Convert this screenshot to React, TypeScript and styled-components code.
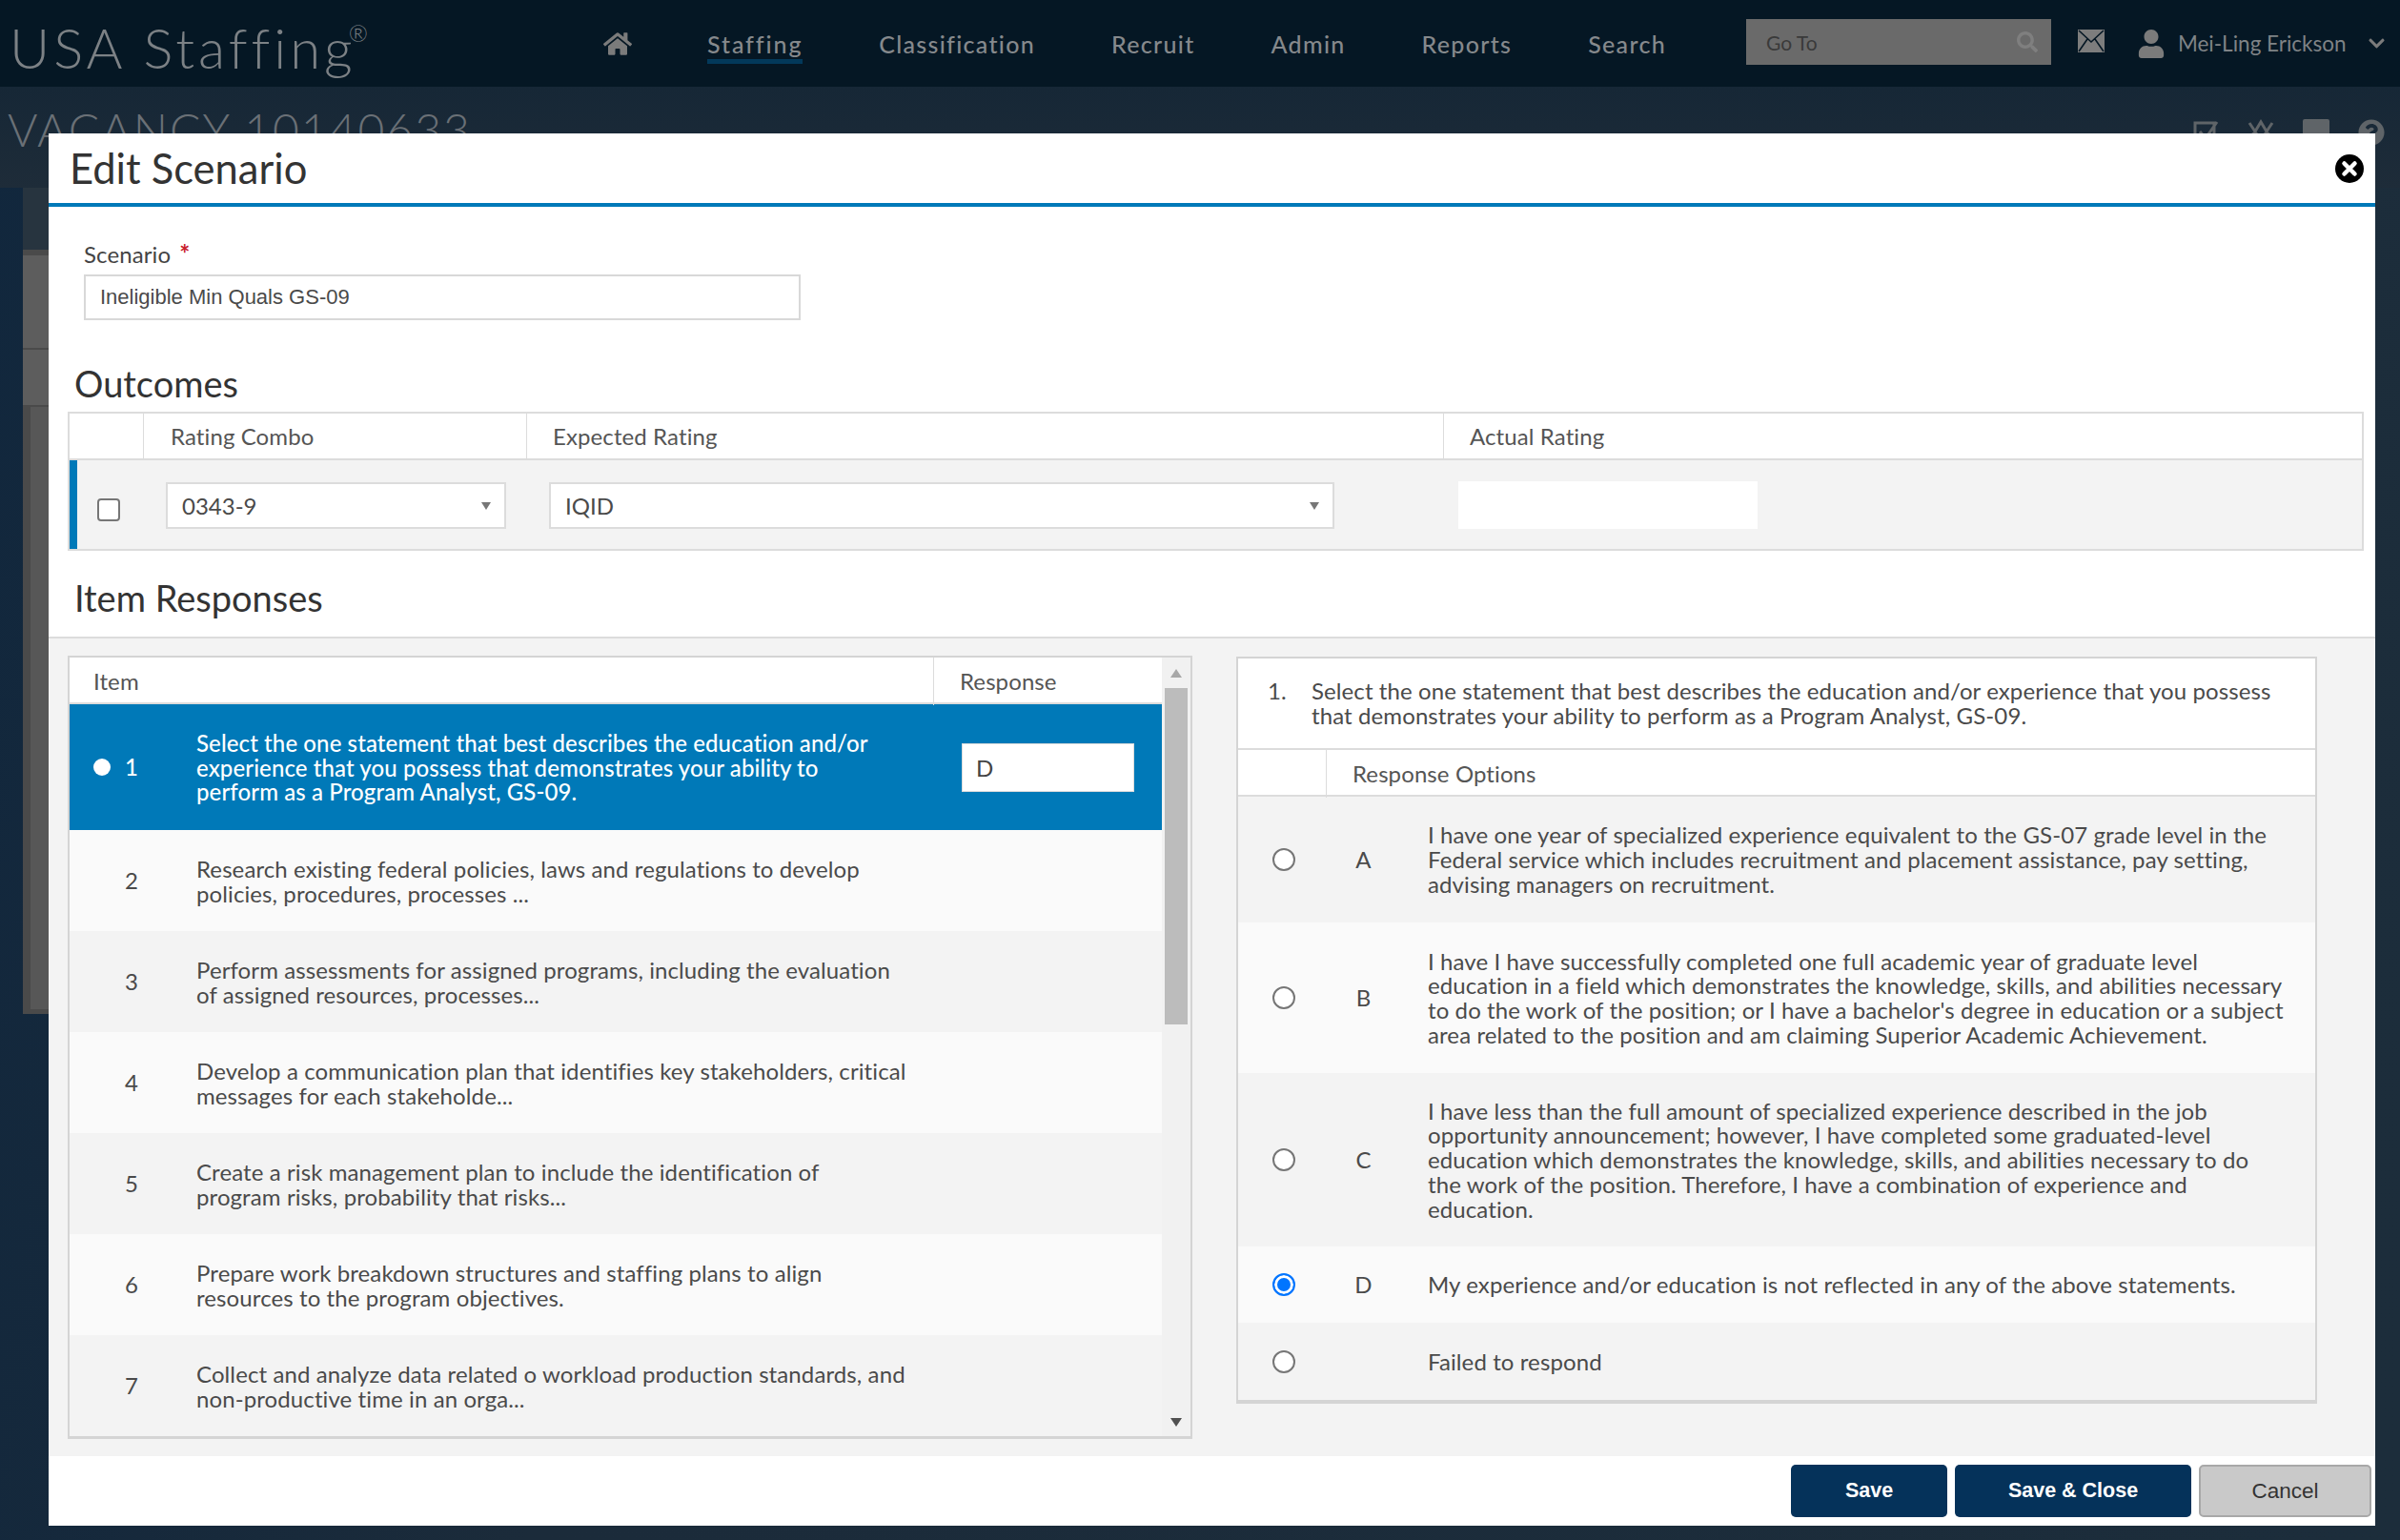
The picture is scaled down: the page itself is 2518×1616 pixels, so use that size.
import React from "react";
import styled, { createGlobalStyle } from "styled-components";
import { FaHome, FaSearch, FaUser, FaChevronDown, FaQuestionCircle } from "react-icons/fa";

const SANS = `"Lato", "Noto Sans", sans-serif`;
const ARIAL = `"Liberation Sans", Arial, sans-serif`;

const items = [
  { n: 1, text: "Select the one statement that best describes the education and/or\nexperience that you possess that demonstrates your ability to\nperform as a Program Analyst, GS-09." },
  { n: 2, text: "Research existing federal policies, laws and regulations to develop\npolicies, procedures, processes ..." },
  { n: 3, text: "Perform assessments for assigned programs, including the evaluation\nof assigned resources, processes..." },
  { n: 4, text: "Develop a communication plan that identifies key stakeholders, critical\nmessages for each stakeholde..." },
  { n: 5, text: "Create a risk management plan to include the identification of\nprogram risks, probability that risks..." },
  { n: 6, text: "Prepare work breakdown structures and staffing plans to align\nresources to the program objectives." },
  { n: 7, text: "Collect and analyze data related o workload production standards, and\nnon-productive time in an orga..." },
];

const options = [
  { key: "A", h: 132, text: "I have one year of specialized experience equivalent to the GS-07 grade level in the\nFederal service which includes recruitment and placement assistance, pay setting,\nadvising managers on recruitment." },
  { key: "B", h: 158, text: "I have I have successfully completed one full academic year of graduate level\neducation in a field which demonstrates the knowledge, skills, and abilities necessary\nto do the work of the position; or I have a bachelor's degree in education or a subject\narea related to the position and am claiming Superior Academic Achievement." },
  { key: "C", h: 182, text: "I have less than the full amount of specialized experience described in the job\nopportunity announcement; however, I have completed some graduated-level\neducation which demonstrates the knowledge, skills, and abilities necessary to do\nthe work of the position. Therefore, I have a combination of experience and\neducation." },
  { key: "D", h: 80, text: "My experience and/or education is not reflected in any of the above statements.", checked: true },
  { key: "", h: 81, text: "Failed to respond" },
];

const GlobalStyle = createGlobalStyle`
  html, body {
    margin: 0;
    padding: 0;
    background: #14283a;
    overflow: hidden;
  }
  * { box-sizing: border-box; }
`;

const Page = styled.div`
  position: relative;
  width: 2518px;
  height: 1616px;
  overflow: hidden;
  font-family: ${SANS};
  background: linear-gradient(100deg, #11273d 0%, #1b2b3a 30%, #1c2d3b 100%);
`;

const TopBar = styled.header`
  display: flex;
  align-items: center;
  height: 91px;
  padding-left: 10px;
  background: #051724;
  color: #85898c;
`;

const Logo = styled.div`
  width: 623px;
  padding-top: 8px;
  font-size: 58px;
  font-weight: 300;
  letter-spacing: 4px;
  color: #7c8185;
  white-space: nowrap;
  sup {
    margin-left: -8px;
    font-size: 24px;
    vertical-align: 28px;
    line-height: 0;
    letter-spacing: 0;
  }
`;

const HomeLink = styled.span`
  display: flex;
  width: 109px;
  font-size: 30px;
  color: #7b7b7b;
`;

const Nav = styled.nav`
  display: flex;
  gap: 80px;
`;

const NavLink = styled.span<{ $active?: boolean }>`
  position: relative;
  font-size: 25px;
  line-height: 30px;
  font-weight: 500;
  letter-spacing: ${(p) => (p.$active ? "1.9px" : "1.3px")};
  color: #85898c;
  &::after {
    content: "";
    display: ${(p) => (p.$active ? "block" : "none")};
    position: absolute;
    left: 0;
    right: 0;
    bottom: -6px;
    height: 5px;
    background: #03395a;
  }
`;

const GoTo = styled.div`
  display: flex;
  align-items: center;
  justify-content: space-between;
  width: 320px;
  height: 48px;
  margin-left: 84px;
  margin-bottom: 3px;
  padding: 0 14px 0 21px;
  background: #6a6a6a;
  font-size: 21px;
  color: #3a3a3a;
  svg { font-size: 22px; color: #7f7f7f; }
`;

const MailIcon = styled.svg`
  width: 28px;
  height: 24px;
  margin-left: 28px;
  margin-bottom: 5px;
`;

const UserBox = styled.div`
  display: flex;
  align-items: center;
  margin-left: 34px;
  font-size: 22.5px;
  color: #7f8386;
  white-space: nowrap;
  svg:first-child { font-size: 30px; margin-right: 13px; color: #7b7b7b; }
  svg:last-child { font-size: 19px; margin-left: 22px; color: #7b7b7b; }
`;

const TitleRow = styled.div`
  display: flex;
  justify-content: space-between;
  align-items: flex-start;
  height: 106px;
  padding: 20px 16px 0 8px;
  background: linear-gradient(180deg, #162736, #1e2c39);
`;

const VacancyTitle = styled.div`
  font-size: 48px;
  line-height: 50px;
  font-weight: 300;
  letter-spacing: 2px;
  color: #6a7076;
`;

const TitleIcons = styled.div`
  display: flex;
  gap: 30px;
  padding-top: 14px;
  color: #5f6468;
  font-size: 28px;
  svg { width: 28px; height: 28px; }
`;

const BackCard = styled.div`
  width: 27px;
  height: 867px;
  margin-left: 24px;
  background: #4a4a4a;
`;

const BackCardHead = styled.div`
  height: 65px;
  background: #27343f;
  margin-bottom: 6px;
`;

const BackCardBand = styled.div<{ $h: number }>`
  height: ${(p) => p.$h}px;
  margin-bottom: 2px;
  background: #5d5d5d;
`;

const BackCardInner = styled.div`
  height: 632px;
  margin-left: 8px;
  background: #575757;
`;

const Modal = styled.div`
  position: absolute;
  left: 51px;
  top: 140px;
  display: flex;
  flex-direction: column;
  width: 2441px;
  height: 1461px;
  background: #fff;
  color: #444;
`;

const ModalHeader = styled.div`
  display: flex;
  align-items: center;
  justify-content: space-between;
  height: 77px;
  padding: 0 12px 2px 22px;
  border-bottom: 4px solid #0079b8;
`;

const ModalTitle = styled.h1`
  margin: 0;
  font-size: 43.5px;
  font-weight: 400;
  color: #333;
`;

const CloseIcon = styled.svg`
  width: 30px;
  height: 30px;
  margin-top: 2px;
`;

const Field = styled.div`
  padding: 34px 0 0 37px;
`;

const FieldLabel = styled.label`
  display: block;
  height: 30px;
  margin-bottom: 7px;
  font-size: 24px;
  line-height: 30px;
  letter-spacing: 0.1px;
  color: #444;
  b {
    color: #c8202c;
    margin-left: 3px;
    font-size: 26px;
  }
`;

const TextInput = styled.input`
  display: block;
  width: 752px;
  height: 48px;
  padding: 0 15px;
  border: 2px solid #d8d8d8;
  outline: none;
  font-family: ${ARIAL};
  font-size: 22px;
  color: #4a4a4a;
`;

const SectionTitle = styled.h2<{ $top: number }>`
  margin: ${(p) => p.$top}px 0 0 27px;
  height: 44px;
  font-size: 38px;
  line-height: 44px;
  font-weight: 400;
  color: #333;
`;

const OutcomesTable = styled.div`
  width: 2409px;
  margin: 8px 0 0 20px;
  border: 2px solid #dcdcdc;
`;

const OutcomesHead = styled.div`
  display: grid;
  grid-template-columns: 77px 402px 962px 1fr;
  height: 49px;
  background: #fff;
  border-bottom: 2px solid #dcdcdc;
`;

const OutcomesRow = styled.div`
  display: grid;
  grid-template-columns: 66px 405px 962px 1fr;
  align-items: center;
  height: 93px;
  background: #f3f3f3;
  border-left: 8px solid #0079b8;
`;

const HeadCell = styled.div<{ $pad?: number; $line?: number }>`
  height: 100%;
  padding-left: ${(p) => p.$pad ?? 27}px;
  border-left: 1px solid #dcdcdc;
  font-size: 24px;
  letter-spacing: 0.1px;
  line-height: ${(p) => p.$line ?? 48}px;
  color: #555;
  &:first-child { border-left: none; }
`;

const CheckCell = styled.div`
  display: flex;
  justify-content: center;
  padding-top: 10px;
`;

const CheckBox = styled.span`
  display: block;
  width: 24px;
  height: 24px;
  border: 2px solid #767676;
  border-radius: 4px;
  background: #fff;
`;

const SelectCell = styled.div<{ $pad: number }>`
  padding: 2px 0 0 ${(p) => p.$pad}px;
`;

const SelectBox = styled.div<{ $w: number }>`
  display: flex;
  align-items: center;
  justify-content: space-between;
  width: ${(p) => p.$w}px;
  height: 49px;
  padding: 0 14px 0 15px;
  border: 2px solid #dcdcdc;
  background: #fff;
  font-size: 24px;
  color: #4a4a4a;
  &::after {
    content: "";
    border-left: 5px solid transparent;
    border-right: 5px solid transparent;
    border-top: 8px solid #777;
  }
`;

const ActualBox = styled.div`
  width: 314px;
  height: 50px;
  margin-left: 16px;
  background: #fff;
`;

const Responses = styled.div`
  display: flex;
  align-items: flex-start;
  gap: 46px;
  margin-top: 19px;
  padding: 18px 0 18px 20px;
  border-top: 2px solid #dcdcdc;
  background: #f3f3f3;
`;

const ItemsPanel = styled.div`
  display: flex;
  width: 1180px;
  height: 822px;
  border: 2px solid #d4d4d4;
  border-bottom-width: 3px;
  background: #f1f1f1;
`;

const ItemsMain = styled.div`
  width: 1146px;
`;

const ItemsHead = styled.div`
  display: grid;
  grid-template-columns: 906px 1fr;
  height: 49px;
  background: #fff;
  border-bottom: 2px solid #dcdcdc;
`;

const ItemRow = styled.div<{ $selected?: boolean; $odd?: boolean }>`
  display: grid;
  grid-template-columns: 133px 773px 1fr;
  align-items: center;
  height: ${(p) => (p.$selected ? "132px" : "106px")};
  background: ${(p) => (p.$selected ? "#0079b8" : p.$odd ? "#f3f3f3" : "#fafafa")};
  color: ${(p) => (p.$selected ? "#fff" : "#4a4a4a")};
  font-weight: ${(p) => (p.$selected ? 500 : 400)};
  font-size: 24px;
  letter-spacing: 0.1px;
  line-height: 25.7px;
`;

const NumberCell = styled.div`
  display: flex;
  align-items: center;
  padding-left: 25px;
`;

const Dot = styled.span<{ $on?: boolean }>`
  width: 18px;
  height: 18px;
  margin-right: 15px;
  border-radius: 50%;
  background: ${(p) => (p.$on ? "#fff" : "transparent")};
`;

const ItemText = styled.div`
  padding-top: 1px;
  white-space: pre-line;
`;

const ResponseCell = styled.div`
  padding-left: 30px;
`;

const ResponseInput = styled.input`
  display: block;
  width: 181px;
  height: 51px;
  padding: 0 14px;
  border: 1px solid #dcdcdc;
  outline: none;
  font-family: ${SANS};
  font-size: 24px;
  color: #444;
  background: #fff;
`;

const ScrollBar = styled.div`
  display: flex;
  flex-direction: column;
  align-items: center;
  flex: 1;
  padding: 12px 0 10px;
`;

const ScrollArrow = styled.span<{ $up?: boolean }>`
  border-left: 6px solid transparent;
  border-right: 6px solid transparent;
  border-bottom: ${(p) => (p.$up ? "9px solid #a8a8a8" : "none")};
  border-top: ${(p) => (p.$up ? "none" : "9px solid #505050")};
`;

const ScrollThumb = styled.div`
  width: 24px;
  height: 353px;
  margin-top: 11px;
  margin-bottom: auto;
  background: #bcbcbc;
`;

const QuestionPanel = styled.div`
  width: 1134px;
  margin-top: 1px;
  border: 2px solid #d4d4d4;
  border-bottom-width: 4px;
  background: #fff;
`;

const Question = styled.div`
  display: grid;
  grid-template-columns: 46px 1fr;
  height: 96px;
  padding: 21px 0 0 31px;
  font-size: 24px;
  letter-spacing: 0.1px;
  line-height: 25.7px;
  color: #4a4a4a;
  white-space: pre-line;
  border-bottom: 2px solid #dcdcdc;
`;

const OptionsHead = styled.div`
  display: grid;
  grid-template-columns: 92px 1fr;
  height: 49px;
  border-bottom: 2px solid #dcdcdc;
`;

const OptionRow = styled.div<{ $h: number; $odd?: boolean }>`
  display: grid;
  grid-template-columns: 92px 79px 1fr;
  align-items: center;
  height: ${(p) => p.$h}px;
  background: ${(p) => (p.$odd ? "#fafafa" : "#f3f3f3")};
  font-size: 24px;
  letter-spacing: 0.1px;
  line-height: 25.7px;
  color: #4a4a4a;
`;

const RadioCell = styled.div`
  display: flex;
  padding-left: 36px;
`;

const Radio = styled.span<{ $on?: boolean }>`
  display: block;
  width: 24px;
  height: 24px;
  border-radius: 50%;
  border: 2px solid ${(p) => (p.$on ? "#0075ff" : "#767676")};
  background: ${(p) => (p.$on ? "#0075ff" : "#fff")};
  box-shadow: ${(p) => (p.$on ? "inset 0 0 0 3px #fff" : "none")};
`;

const OptionKey = styled.div`
  text-align: center;
`;

const OptionText = styled.div`
  padding-left: 28px;
  white-space: pre-line;
`;

const Footer = styled.div`
  display: flex;
  justify-content: flex-end;
  gap: 8px;
  padding: 9px 4px 0 0;
`;

const Button = styled.button<{ $w: number; $plain?: boolean }>`
  width: ${(p) => p.$w}px;
  height: 55px;
  border: ${(p) => (p.$plain ? "2px solid #a8a8a8" : "none")};
  border-radius: 5px;
  background: ${(p) => (p.$plain ? "#c9c9c9" : "#05325a")};
  color: ${(p) => (p.$plain ? "#333" : "#fff")};
  font-family: ${ARIAL};
  font-size: ${(p) => (p.$plain ? "22.5px" : "21.5px")};
  font-weight: ${(p) => (p.$plain ? 400 : 700)};
`;

export default function App() {
  return (
    <Page>
      <GlobalStyle />
      <TopBar>
        <Logo>
          USA Staffing<sup>®</sup>
        </Logo>
        <HomeLink>
          <FaHome />
        </HomeLink>
        <Nav>
          <NavLink $active>Staffing</NavLink>
          <NavLink>Classification</NavLink>
          <NavLink>Recruit</NavLink>
          <NavLink>Admin</NavLink>
          <NavLink>Reports</NavLink>
          <NavLink>Search</NavLink>
        </Nav>
        <GoTo>
          Go To
          <FaSearch />
        </GoTo>
        <MailIcon viewBox="0 0 28 24">
          <rect width="28" height="24" fill="#7d7d7d" />
          <path d="M1 1l13 12L27 1M1 23l9-13M27 23l-9-13" fill="none" stroke="#051724" strokeWidth="1.6" />
        </MailIcon>
        <UserBox>
          <FaUser />
          Mei-Ling Erickson
          <FaChevronDown />
        </UserBox>
      </TopBar>

      <TitleRow>
        <VacancyTitle>VACANCY 10140633 ..</VacancyTitle>
        <TitleIcons>
          <svg viewBox="0 0 28 28" fill="none" stroke="currentColor" strokeWidth="3">
            <path d="M3 4h20v22H3zM8 13l6 7L26 3" />
          </svg>
          <svg viewBox="0 0 28 28" fill="none" stroke="currentColor" strokeWidth="3">
            <path d="M2 4l6 9 6-10 6 10 6-9M3 18l5-4 6 6 6-6 5 4" />
          </svg>
          <svg viewBox="0 0 28 28" fill="currentColor">
            <rect width="28" height="26" rx="2" />
          </svg>
          <FaQuestionCircle />
        </TitleIcons>
      </TitleRow>

      <BackCard>
        <BackCardHead />
        <BackCardBand $h={97} />
        <BackCardBand $h={58} />
        <BackCardInner />
      </BackCard>

      <Modal>
        <ModalHeader>
          <ModalTitle>Edit Scenario</ModalTitle>
          <CloseIcon viewBox="0 0 30 30">
            <circle cx="15" cy="15" r="15" fill="#000" />
            <path d="M9.5 9.5l11 11M20.5 9.5l-11 11" stroke="#fff" strokeWidth="4.5" strokeLinecap="round" />
          </CloseIcon>
        </ModalHeader>

        <Field>
          <FieldLabel>
            Scenario <b>*</b>
          </FieldLabel>
          <TextInput defaultValue="Ineligible Min Quals GS-09" />
        </Field>

        <SectionTitle $top={44}>Outcomes</SectionTitle>
        <OutcomesTable>
          <OutcomesHead>
            <HeadCell />
            <HeadCell $pad={28}>Rating Combo</HeadCell>
            <HeadCell>Expected Rating</HeadCell>
            <HeadCell>Actual Rating</HeadCell>
          </OutcomesHead>
          <OutcomesRow>
            <CheckCell>
              <CheckBox />
            </CheckCell>
            <SelectCell $pad={27}>
              <SelectBox $w={357}>0343-9</SelectBox>
            </SelectCell>
            <SelectCell $pad={24}>
              <SelectBox $w={824}>IQID</SelectBox>
            </SelectCell>
            <ActualBox />
          </OutcomesRow>
        </OutcomesTable>

        <SectionTitle $top={27}>Item Responses</SectionTitle>
        <Responses>
          <ItemsPanel>
            <ItemsMain>
              <ItemsHead>
                <HeadCell $line={50} $pad={25}>Item</HeadCell>
                <HeadCell $line={50}>Response</HeadCell>
              </ItemsHead>
              {items.map((item, i) => (
                <ItemRow key={item.n} $selected={i === 0} $odd={i % 2 === 0}>
                  <NumberCell>
                    <Dot $on={i === 0} />
                    {item.n}
                  </NumberCell>
                  <ItemText>{item.text}</ItemText>
                  {i === 0 ? (
                    <ResponseCell>
                      <ResponseInput defaultValue="D" />
                    </ResponseCell>
                  ) : (
                    <div />
                  )}
                </ItemRow>
              ))}
            </ItemsMain>
            <ScrollBar>
              <ScrollArrow $up />
              <ScrollThumb />
              <ScrollArrow />
            </ScrollBar>
          </ItemsPanel>

          <QuestionPanel>
            <Question>
              <span>1.</span>
              <span>
                {"Select the one statement that best describes the education and/or experience that you possess\nthat demonstrates your ability to perform as a Program Analyst, GS-09."}
              </span>
            </Question>
            <OptionsHead>
              <HeadCell />
              <HeadCell $line={50}>Response Options</HeadCell>
            </OptionsHead>
            {options.map((opt, i) => (
              <OptionRow key={opt.text} $h={opt.h} $odd={i % 2 === 1}>
                <RadioCell>
                  <Radio $on={opt.checked} />
                </RadioCell>
                <OptionKey>{opt.key}</OptionKey>
                <OptionText>{opt.text}</OptionText>
              </OptionRow>
            ))}
          </QuestionPanel>
        </Responses>

        <Footer>
          <Button $w={164}>Save</Button>
          <Button $w={248}>Save &amp; Close</Button>
          <Button $w={181} $plain>
            Cancel
          </Button>
        </Footer>
      </Modal>
    </Page>
  );
}
